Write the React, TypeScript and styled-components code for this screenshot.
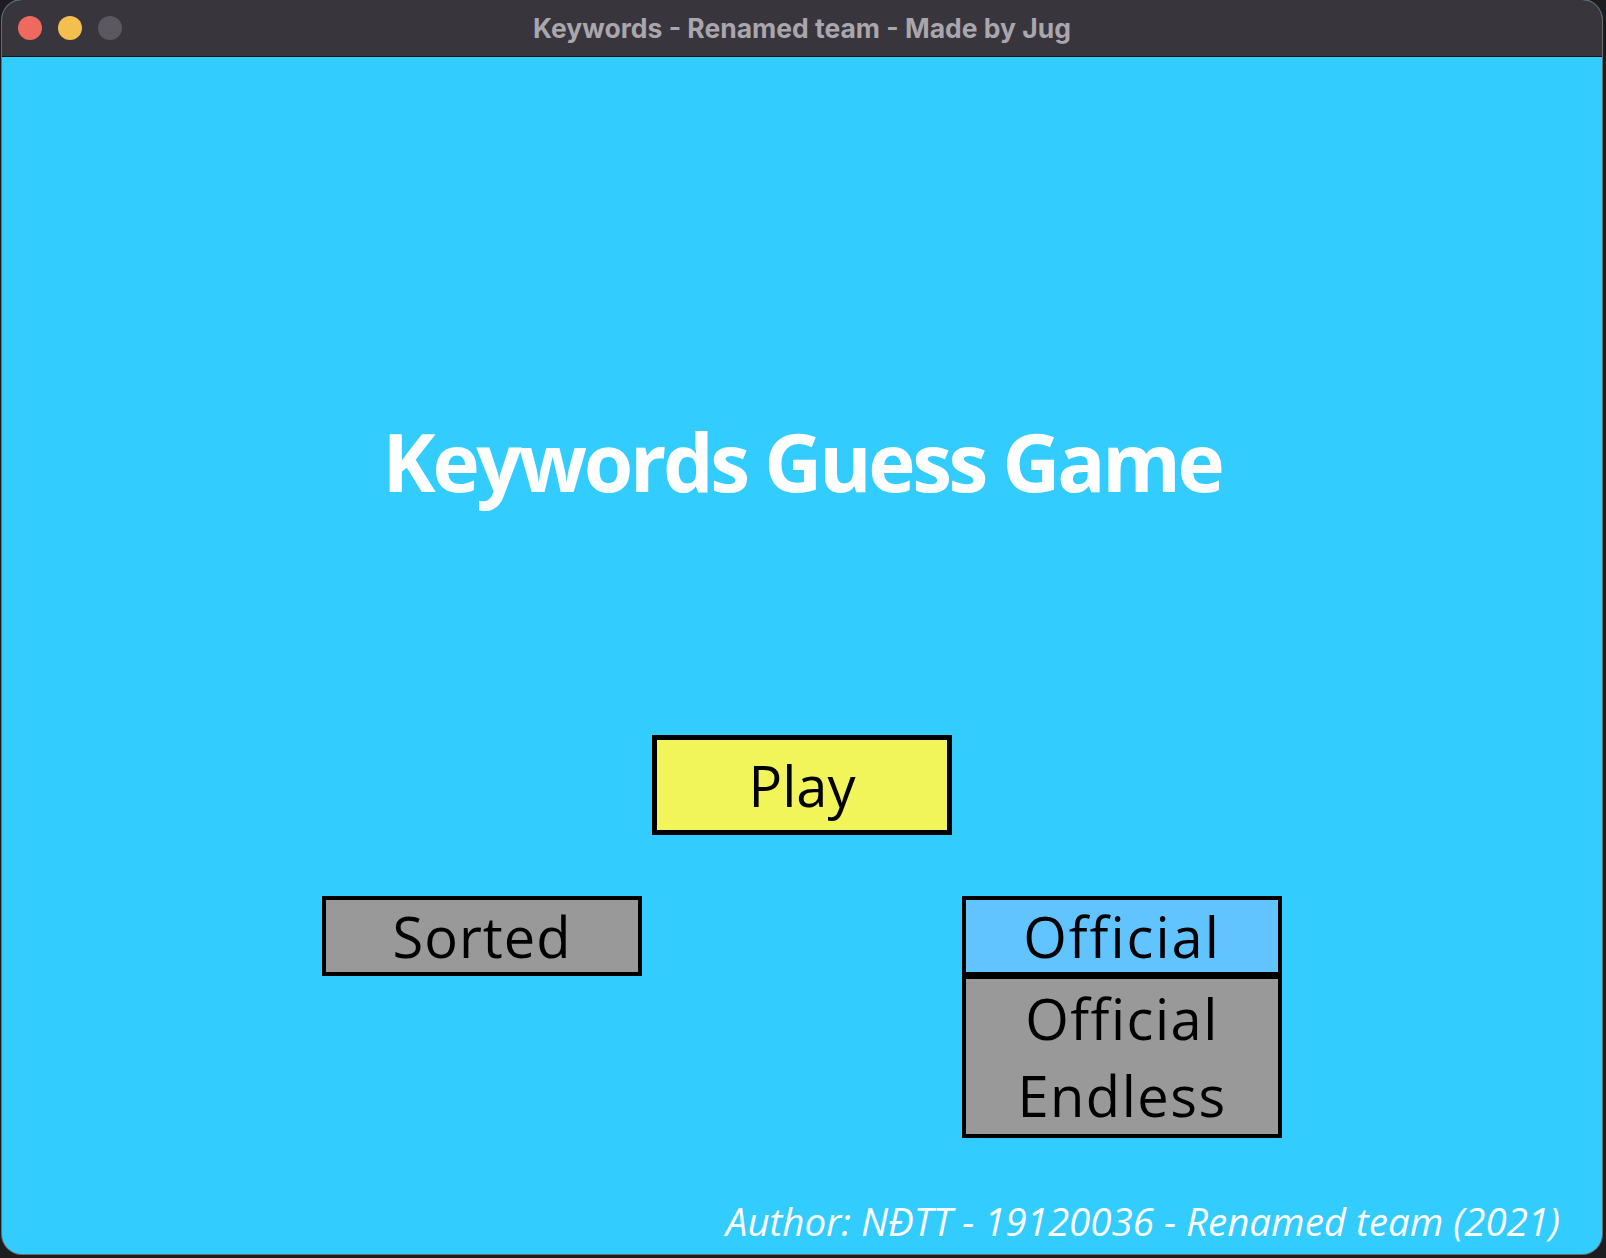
import React from "react";
import styled, { createGlobalStyle } from "styled-components";

const GlobalStyle = createGlobalStyle`
  html, body {
    margin: 0;
    padding: 0;
    background: #1d1d1f;
  }
  * {
    box-sizing: border-box;
  }
`;

const gameFont = `"Comic Sans MS", "Open Sans", sans-serif`;

const Screen = styled.div`
  width: 1606px;
  height: 1258px;
  padding: 0 4px 4px 2px;
  background: #1d1d1f;
  display: flex;
`;

const Window = styled.div`
  flex: 1;
  display: flex;
  flex-direction: column;
  border-radius: 20px;
  overflow: hidden;
  box-shadow: 0 0 0 1px #6c6b70;
  background: #33ccff;
`;

const TitleBar = styled.div`
  height: 57px;
  flex: none;
  position: relative;
  display: flex;
  align-items: center;
  justify-content: center;
  background: #38353c;
  border-bottom: 1px solid #111013;
`;

const Lights = styled.div`
  position: absolute;
  left: 16px;
  top: 16px;
  display: flex;
  gap: 16px;
`;

const Light = styled.span<{ $color: string }>`
  width: 24px;
  height: 24px;
  border-radius: 50%;
  background: ${(p) => p.$color};
`;

const WindowTitle = styled.div`
  font-family: Inter, "Liberation Sans", sans-serif;
  font-weight: 700;
  font-size: 26.5px;
  color: #a9a6ad;
`;

const Content = styled.main`
  flex: 1;
  display: flex;
  flex-direction: column;
  align-items: center;
  padding-top: 354px;
  font-family: ${gameFont};
`;

const GameTitle = styled.h1`
  margin: 0;
  font-family: ${gameFont};
  font-weight: 700;
  font-size: 80px;
  line-height: 100px;
  color: #ffffff;
  letter-spacing: -3.3px;
`;

const Box = styled.div<{ $bg: string; $border?: number }>`
  width: 320px;
  height: 80px;
  display: flex;
  align-items: center;
  justify-content: center;
  background: ${(p) => p.$bg};
  border: ${(p) => p.$border ?? 4}px solid #000;
  font-size: 56px;
  letter-spacing: 1px;
  color: #000;
  line-height: 1;
`;

const PlayButton = styled(Box)`
  width: 300px;
  height: 100px;
  margin-top: 224px;
  letter-spacing: 0;
`;

const OptionsRow = styled.div`
  display: flex;
  gap: 320px;
  margin-top: 61px;
  align-items: flex-start;
`;

const Dropdown = styled.div`
  display: flex;
  flex-direction: column;
  width: 320px;
`;

const DropHeader = styled(Box)`
  height: 83px;
  border-bottom-width: 7px;
  letter-spacing: 2px;
`;

const DropList = styled.div`
  display: flex;
  flex-direction: column;
  background: #999999;
  border: 4px solid #000;
  border-top: none;
  padding: 0 0 1px;
`;

const DropItem = styled.div`
  height: 77px;
  display: flex;
  align-items: center;
  justify-content: center;
  font-size: 56px;
  letter-spacing: 1.5px;
  color: #000;
`;

const Footer = styled.div`
  margin-top: auto;
  align-self: flex-end;
  padding: 0 42px 7px 0;
  font-style: italic;
  font-size: 38.5px;
  color: #ffffff;
`;

export default function App() {
  return (
    <>
      <GlobalStyle />
      <Screen>
        <Window>
          <TitleBar>
            <Lights>
              <Light $color="#ee6a5f" />
              <Light $color="#f5bf4f" />
              <Light $color="#5b585f" />
            </Lights>
            <WindowTitle>Keywords - Renamed team - Made by Jug</WindowTitle>
          </TitleBar>
          <Content>
            <GameTitle>Keywords Guess Game</GameTitle>
            <PlayButton $bg="#f2f55a" $border={5}>Play</PlayButton>
            <OptionsRow>
              <Box $bg="#999999">Sorted</Box>
              <Dropdown>
                <DropHeader $bg="#62c4ff">Official</DropHeader>
                <DropList>
                  <DropItem>Official</DropItem>
                  <DropItem>Endless</DropItem>
                </DropList>
              </Dropdown>
            </OptionsRow>
            <Footer>Author: NĐTT - 19120036 - Renamed team (2021)</Footer>
          </Content>
        </Window>
      </Screen>
    </>
  );
}
